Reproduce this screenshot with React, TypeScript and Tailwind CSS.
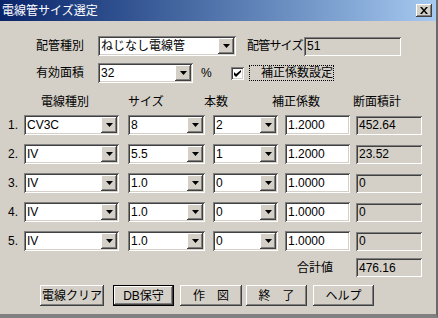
import React from "react";

const sunken =
  "shadow-[inset_1px_1px_#808080,inset_-1px_-1px_#ffffff,inset_2px_2px_#404040,inset_-2px_-2px_#d4d0c8]";
const raised =
  "shadow-[inset_-1px_-1px_#404040,inset_1px_1px_#ffffff,inset_-2px_-2px_#808080,inset_2px_2px_#d4d0c8]";

function Arrow() {
  return (
    <svg width="7" height="4" viewBox="0 0 7 4">
      <path d="M0 0h7L3.5 4z" fill="#000" />
    </svg>
  );
}

function Combo({ value, w }: { value: string; w: string }) {
  return (
    <div className={`flex h-[20px] shrink-0 bg-white p-[2px] ${sunken} ${w}`}>
      <div className="flex flex-1 items-center overflow-hidden whitespace-nowrap pl-[1px] leading-none">
        {value}
      </div>
      <div
        className={`flex h-[16px] w-[16px] items-center justify-center bg-[#d4d0c8] ${raised}`}
      >
        <Arrow />
      </div>
    </div>
  );
}

function Field({
  value,
  w,
  readOnly,
  h = "h-[20px]",
}: {
  value: string;
  w: string;
  readOnly?: boolean;
  h?: string;
}) {
  return (
    <div
      className={`flex shrink-0 items-center pl-[3px] leading-none ${h} ${w} ${sunken} ${readOnly ? "bg-[#d4d0c8]" : "bg-white"}`}
    >
      {value}
    </div>
  );
}

function Button({
  label,
  w,
  ml,
  def,
}: {
  label: string;
  w: string;
  ml: string;
  def?: boolean;
}) {
  if (def) {
    return (
      <div className={`h-[21px] shrink-0 border border-black ${w} ${ml}`}>
        <div
          className={`flex h-full w-full items-center justify-center whitespace-nowrap leading-none ${raised}`}
        >
          {label}
        </div>
      </div>
    );
  }
  return (
    <div
      className={`flex h-[21px] shrink-0 items-center justify-center whitespace-nowrap leading-none ${raised} ${w} ${ml}`}
    >
      {label}
    </div>
  );
}

const rows = [
  { n: "1.", type: "CV3C", size: "8", count: "2", k: "1.2000", area: "452.64" },
  { n: "2.", type: "IV", size: "5.5", count: "1", k: "1.2000", area: "23.52" },
  { n: "3.", type: "IV", size: "1.0", count: "0", k: "1.0000", area: "0" },
  { n: "4.", type: "IV", size: "1.0", count: "0", k: "1.0000", area: "0" },
  { n: "5.", type: "IV", size: "1.0", count: "0", k: "1.0000", area: "0" },
];

export default function App() {
  return (
    <div className="flex h-[318px] w-[438px] flex-col overflow-hidden border-r-2 border-b-[4px] border-r-[#6a6a6a] border-b-[#808080] bg-[#d4d0c8] font-['Liberation_Sans','Noto_Sans_CJK_JP',sans-serif] text-[12px] text-black">
      {/* title bar */}
      <div className="flex h-[21px] shrink-0 items-center bg-gradient-to-r from-[#0a246a] to-[#a6caf0] pl-[2px] text-white">
        <span className="leading-none">電線管サイズ選定</span>
        <div
          className={`ml-auto mr-[4px] flex h-[13px] w-[16px] items-center justify-center bg-[#d4d0c8] ${raised}`}
        >
          <svg width="8" height="7" viewBox="0 0 8 7">
            <path d="M0 0h2l2 2.5L6 0h2L5 3.5 8 7H6L4 4.5 2 7H0l3-3.5z" fill="#000" />
          </svg>
        </div>
      </div>

      {/* pipe type row */}
      <div className="mt-[15px] flex h-[20px] items-center">
        <span className="w-[98px] shrink-0 pl-[36px] leading-none">配管種別</span>
        <Combo value="ねじなし電線管" w="w-[138px]" />
        <span className="ml-[11px] w-[57px] shrink-0 whitespace-nowrap tracking-[-0.8px] leading-none">
          配管サイズ
        </span>
        <Field value="51" w="w-[97px]" readOnly h="h-[19px]" />
      </div>

      {/* area row */}
      <div className="mt-[7px] flex h-[20px] items-center">
        <span className="w-[98px] shrink-0 pl-[36px] leading-none">有効面積</span>
        <Combo value="32" w="w-[95px]" />
        <span className="ml-[8px] w-[30px] shrink-0 leading-none">%</span>
        <div className={`flex h-[13px] w-[13px] shrink-0 items-center justify-center bg-white ${sunken}`}>
          <svg width="7" height="7" viewBox="0 0 7 7">
            <path d="M0 2v3l2 2 5-5V-0L2 4z" fill="#000" />
          </svg>
        </div>
        <div className="ml-[5px] flex h-[16px] w-[85px] items-center whitespace-nowrap border border-dotted border-black pl-[11px] leading-none">
          補正係数設定
        </div>
      </div>

      {/* column headers */}
      <div className="mt-[11px] flex h-[16px] items-center leading-none">
        <span className="w-[128px] shrink-0 pl-[41px]">電線種別</span>
        <span className="w-[76px] shrink-0">サイズ</span>
        <span className="w-[68px] shrink-0">本数</span>
        <span className="w-[81px] shrink-0">補正係数</span>
        <span>断面積計</span>
      </div>

      {/* wire rows */}
      <div className="mt-[5px] flex flex-col gap-[9px]">
        {rows.map((r) => (
          <div key={r.n} className="flex h-[20px] items-center">
            <span className="w-[24px] shrink-0 pl-[8px] leading-none">{r.n}</span>
            <Combo value={r.type} w="w-[95px]" />
            <div className="ml-[9px]">
              <Combo value={r.size} w="w-[77px]" />
            </div>
            <div className="ml-[8px]">
              <Combo value={r.count} w="w-[65px]" />
            </div>
            <div className="ml-[7px]">
              <Field value={r.k} w="w-[65px]" />
            </div>
            <div className="ml-[6px]">
              <Field value={r.area} w="w-[66px]" readOnly h="h-[19px]" />
            </div>
          </div>
        ))}
      </div>

      {/* total */}
      <div className="mt-[7px] flex h-[19px] items-center">
        <span className="w-[356px] shrink-0 pl-[297px] leading-none">合計値</span>
        <Field value="476.16" w="w-[66px]" readOnly h="h-[19px]" />
      </div>

      {/* buttons */}
      <div className="mt-[8px] flex">
        <Button label="電線クリア" w="w-[64px]" ml="ml-[40px]" />
        <Button label="DB保守" w="w-[61px]" ml="ml-[9px]" def />
        <Button label="作　図" w="w-[62px]" ml="ml-[6px]" />
        <Button label="終　了" w="w-[61px]" ml="ml-[4px]" />
        <Button label="ヘルプ" w="w-[61px]" ml="ml-[6px]" />
      </div>
    </div>
  );
}
